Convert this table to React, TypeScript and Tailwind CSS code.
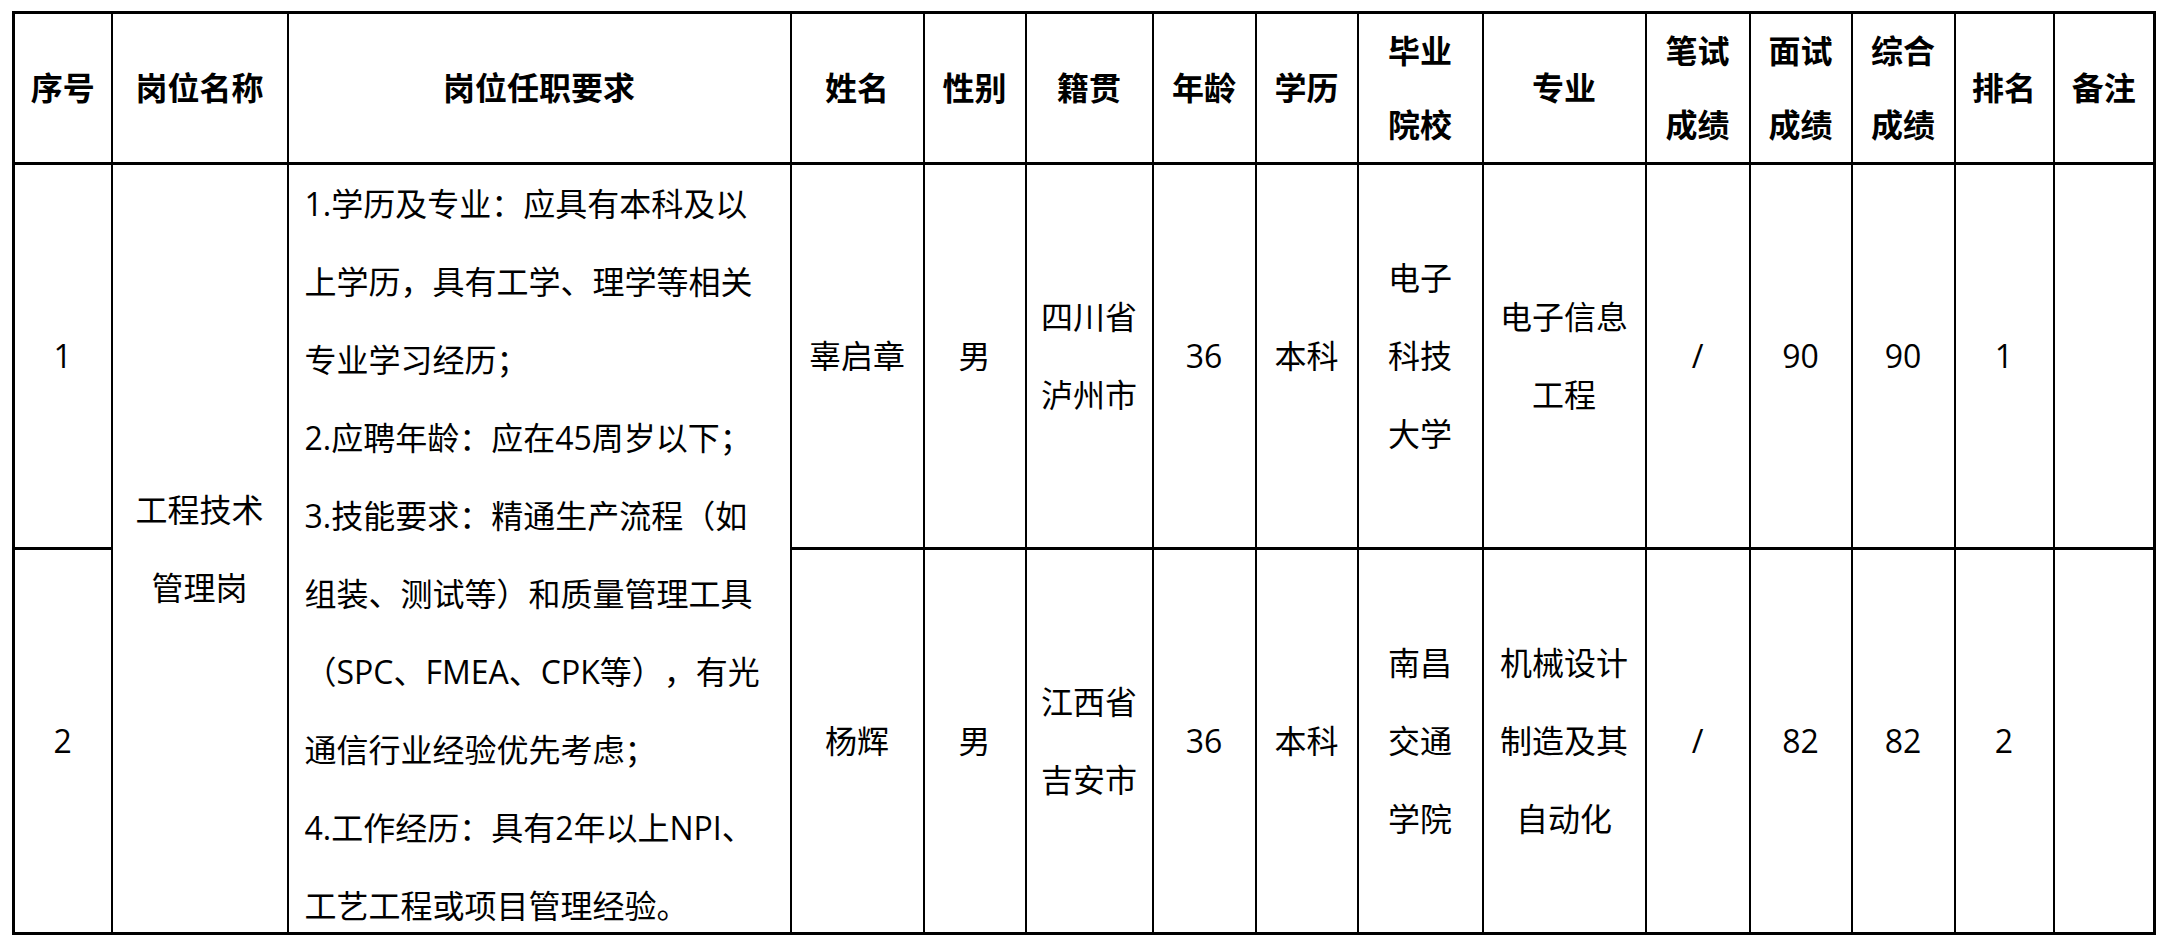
const COLS = [
  'w-[98px]', 'w-[176px]', 'w-[503px]', 'w-[133px]', 'w-[102px]', 'w-[127px]', 'w-[103px]', 'w-[102px]',
  'w-[125px]', 'w-[163px]', 'w-[104px]', 'w-[102px]', 'w-[103px]', 'w-[99px]', 'w-[101px]',
];

const HEADERS: string[][] = [
  ['序号'], ['岗位名称'], ['岗位任职要求'], ['姓名'], ['性别'], ['籍贯'], ['年龄'], ['学历'],
  ['毕业', '院校'], ['专业'], ['笔试', '成绩'], ['面试', '成绩'], ['综合', '成绩'], ['排名'], ['备注'],
];

const REQUIREMENTS = [
  '1.学历及专业：应具有本科及以',
  '上学历，具有工学、理学等相关',
  '专业学习经历；',
  '2.应聘年龄：应在45周岁以下；',
  '3.技能要求：精通生产流程（如',
  '组装、测试等）和质量管理工具',
  '（SPC、FMEA、CPK等），有光',
  '通信行业经验优先考虑；',
  '4.工作经历：具有2年以上NPI、',
  '工艺工程或项目管理经验。',
];

type Person = {
  no: string;
  name: string;
  sex: string;
  origin: string[];
  age: string;
  edu: string;
  school: string[];
  major: string[];
  written: string;
  interview: string;
  total: string;
  rank: string;
};

const PEOPLE: Person[] = [
  {
    no: '1', name: '辜启章', sex: '男', origin: ['四川省', '泸州市'], age: '36', edu: '本科',
    school: ['电子', '科技', '大学'], major: ['电子信息', '工程'], written: '/', interview: '90', total: '90', rank: '1',
  },
  {
    no: '2', name: '杨辉', sex: '男', origin: ['江西省', '吉安市'], age: '36', edu: '本科',
    school: ['南昌', '交通', '学院'], major: ['机械设计', '制造及其', '自动化'], written: '/', interview: '82', total: '82', rank: '2',
  },
];

function Lines({ lines }: { lines: string[] }) {
  return (
    <>
      {lines.map(l => (
        <div key={l} className="whitespace-nowrap">{l}</div>
      ))}
    </>
  );
}

const cell = 'border-2 border-black text-center align-middle leading-[78px] p-0';

export default function App() {
  return (
    <div className="min-h-screen bg-white pt-[11px] pl-[12px] font-['Open_Sans','Noto_Sans_CJK_SC',sans-serif] text-[32px] text-black [text-spacing-trim:space-all]">
      <table className="table-fixed border-collapse border-[3px] border-black w-[2141px]">
        <colgroup>
          {COLS.map((c, i) => (
            <col key={i} className={c} />
          ))}
        </colgroup>
        <thead>
          <tr className="h-[149px]">
            {HEADERS.map((h, i) => (
              <th key={i} className="border-2 border-b-[3px] border-black text-center align-middle leading-[74px] p-0 font-bold">
                <Lines lines={h} />
              </th>
            ))}
          </tr>
        </thead>
        <tbody>
          {PEOPLE.map((p, idx) => (
            <tr key={p.no} className="h-[385px]">
              <td className={`${cell} ${idx === 0 ? 'border-b-[3px]' : ''}`}>{p.no}</td>
              {idx === 0 && (
                <>
                  <td rowSpan={2} className={cell}>
                    <Lines lines={['工程技术', '管理岗']} />
                  </td>
                  <td rowSpan={2} className="border-2 border-black align-top p-0">
                    <div className="h-[760px] pl-[16px] leading-[78px] text-left">
                      {REQUIREMENTS.map(r => (
                        <div key={r} className="whitespace-nowrap">{r}</div>
                      ))}
                    </div>
                  </td>
                </>
              )}
              {[
                [p.name], [p.sex], p.origin, [p.age], [p.edu], p.school, p.major,
                [p.written], [p.interview], [p.total], [p.rank], [''],
              ].map((v, i) => (
                <td key={i} className={`${cell} ${idx === 0 ? 'border-b-[3px]' : ''}`}>
                  <Lines lines={v} />
                </td>
              ))}
            </tr>
          ))}
        </tbody>
      </table>
    </div>
  );
}
